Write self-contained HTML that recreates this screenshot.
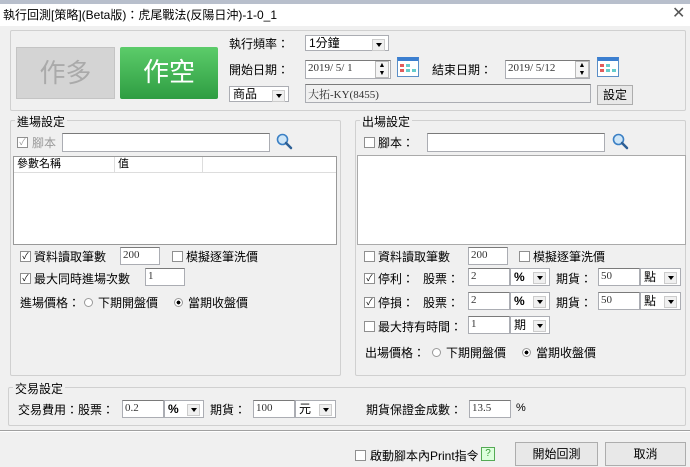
<!DOCTYPE html>
<html><head><meta charset="utf-8"><style>
*{box-sizing:border-box;margin:0;padding:0}
body{width:690px;height:467px;background:#f0f0f0;position:relative;overflow:hidden;font-family:"Liberation Sans","Noto Sans CJK TC",sans-serif;font-size:12px;color:#000}
.a{position:absolute;white-space:nowrap}
.in{position:absolute;background:#fff;border:1px solid #abadb3;border-top-color:#7a7a7a;font-size:11px;padding:1px 2px;color:#333;font-family:"Liberation Serif","Noto Serif CJK SC",serif}
.grp{position:absolute;border:1px solid #d0d0d0;border-radius:2px}
.gl{position:absolute;background:#f0f0f0;padding:0 2px;top:-8px;left:4px;font-size:12px}
.cb{position:absolute;width:11px;height:11px;border:1px solid #8f8f8f;background:#fff;font-size:9px;line-height:9px;text-align:center}
.dd{position:absolute;background:#fff;border:1px solid #abadb3;font-size:12px;padding:0 3px}
.dd::after{content:"";position:absolute;right:3px;top:3px;width:11px;height:10px;background:#f0f0f0;border:1px solid #ccc}
.dd::before{content:"";position:absolute;right:6px;top:7px;border:3px solid transparent;border-top:4px solid #000;z-index:2}
.btn{position:absolute;background:#e8e8e8;border:1px solid #adadad;text-align:center}
.rd{position:absolute;width:9px;height:9px;border-radius:50%;border:1px solid #999;background:#fff}
.cal{position:absolute;width:22px;height:20px;border:1px solid #5b8fc7;background:#fff;border-top:4px solid #3c7fd0}
.cal i{position:absolute;width:4px;height:3px;background:#e25b5b}
.sp{position:absolute;width:14px;border:1px solid #bbb;background:#f4f4f4;font-size:7px;text-align:center;line-height:8px}
</style></head><body>
<div class="a" style="left:0;top:0;width:690px;height:3px;background:#8f9bb0"></div>
<div class="a" style="left:0;top:3px;width:690px;height:23px;background:#fff"></div>
<div class="a" style="left:0;top:0;width:690px;height:4px;background:#b8bfcc"></div>
<div class="a" style="left:3px;top:6px;font-size:12px">執行回測[策略](Beta版)：虎尾戰法(反陽日沖)-1-0_1</div>
<div class="a" style="left:672px;top:3px;font-size:16px;color:#555">✕</div>

<div class="grp" style="left:10px;top:30px;width:676px;height:81px"></div>
<div class="a" style="left:16px;top:47px;width:99px;height:52px;background:#d4d4d4;border:1px solid #c4c4c4;color:#aaa;font-size:26px;text-align:center;line-height:50px">作多</div>
<div class="a" style="left:120px;top:47px;width:98px;height:52px;background:linear-gradient(#5ccc6a,#2e9d42);border-radius:2px;color:#fff;font-size:26px;text-align:center;line-height:50px">作空</div>
<div class="a" style="left:229px;top:35px">執行頻率：</div>
<div class="dd" style="left:305px;top:35px;width:84px;height:16px;line-height:14px">1分鐘</div>
<div class="a" style="left:229px;top:61px">開始日期：</div>
<div class="in" style="left:305px;top:60px;width:86px;height:19px">2019/ 5/ 1</div>
<div class="sp" style="left:375px;top:61px;height:17px">▲<br>▼</div>
<div class="cal" style="left:397px;top:57px"><i style="left:2px;top:3px"></i><i style="left:2px;top:8px"></i><i style="left:8px;top:3px;background:#6cc"></i><i style="left:14px;top:8px;background:#6cc"></i><i style="left:8px;top:8px;background:#6cc"></i></div>
<div class="a" style="left:432px;top:61px">結束日期：</div>
<div class="in" style="left:505px;top:60px;width:85px;height:19px">2019/ 5/12</div>
<div class="sp" style="left:575px;top:61px;height:17px">▲<br>▼</div>
<div class="cal" style="left:597px;top:57px"><i style="left:2px;top:3px"></i><i style="left:2px;top:8px"></i><i style="left:8px;top:3px;background:#6cc"></i><i style="left:14px;top:8px;background:#6cc"></i><i style="left:8px;top:8px;background:#6cc"></i></div>
<div class="dd" style="left:229px;top:86px;width:60px;height:16px;line-height:14px">商品</div>
<div class="in" style="left:305px;top:84px;width:286px;height:19px;background:#f0f0f0">大拓-KY(8455)</div>
<div class="btn" style="left:597px;top:85px;width:36px;height:20px;line-height:18px">設定</div>

<div class="grp" style="left:10px;top:120px;width:331px;height:256px"><span class="gl">進場設定</span></div>
<div class="cb" style="left:17px;top:137px;color:#999">✓</div>
<div class="a" style="left:32px;top:134px;color:#999">腳本</div>
<div class="in" style="left:62px;top:133px;width:208px;height:19px"></div>
<svg class="a" style="left:276px;top:133px" width="17" height="17" viewBox="0 0 17 17"><circle cx="6.5" cy="6.5" r="5" fill="#cfe6f7" stroke="#3a7fc4" stroke-width="1.6"/><path d="M10 10 L15 15" stroke="#2d5f95" stroke-width="2.5" stroke-linecap="round"/></svg>
<div class="a" style="left:13px;top:156px;width:324px;height:89px;background:#fff;border:1px solid #999"></div>
<div class="a" style="left:14px;top:157px;width:322px;height:16px;background:#fff;border-bottom:1px solid #ddd;font-size:11px;line-height:15px"><span style="position:absolute;left:3px">參數名稱</span><span style="position:absolute;left:100px;border-left:1px solid #ddd;padding-left:3px;height:16px">值</span><span style="position:absolute;left:188px;border-left:1px solid #ddd;height:16px"></span></div>
<div class="cb" style="left:20px;top:251px">✓</div><div class="a" style="left:34px;top:248px">資料讀取筆數</div>
<div class="in" style="left:120px;top:247px;width:40px;height:18px">200</div>
<div class="cb" style="left:172px;top:251px"></div><div class="a" style="left:186px;top:248px">模擬逐筆洗價</div>
<div class="cb" style="left:20px;top:273px">✓</div><div class="a" style="left:34px;top:270px">最大同時進場次數</div>
<div class="in" style="left:145px;top:268px;width:40px;height:18px">1</div>
<div class="a" style="left:20px;top:294px">進場價格：</div>
<div class="rd" style="left:84px;top:298px"></div><div class="a" style="left:98px;top:294px">下期開盤價</div>
<div class="rd" style="left:174px;top:298px;background:radial-gradient(#000 35%,#fff 40%)"></div><div class="a" style="left:188px;top:294px">當期收盤價</div>

<div class="grp" style="left:355px;top:120px;width:331px;height:256px"><span class="gl">出場設定</span></div>
<div class="cb" style="left:364px;top:137px"></div><div class="a" style="left:378px;top:134px">腳本：</div>
<div class="in" style="left:427px;top:133px;width:178px;height:19px"></div>
<svg class="a" style="left:612px;top:133px" width="17" height="17" viewBox="0 0 17 17"><circle cx="6.5" cy="6.5" r="5" fill="#cfe6f7" stroke="#3a7fc4" stroke-width="1.6"/><path d="M10 10 L15 15" stroke="#2d5f95" stroke-width="2.5" stroke-linecap="round"/></svg>
<div class="a" style="left:357px;top:155px;width:329px;height:90px;background:#fff;border:1px solid #aaa"></div>
<div class="cb" style="left:364px;top:251px"></div><div class="a" style="left:378px;top:248px">資料讀取筆數</div>
<div class="in" style="left:468px;top:247px;width:40px;height:18px">200</div>
<div class="cb" style="left:519px;top:251px"></div><div class="a" style="left:533px;top:248px">模擬逐筆洗價</div>
<div class="cb" style="left:364px;top:273px">✓</div><div class="a" style="left:378px;top:270px">停利：</div><div class="a" style="left:423px;top:270px">股票：</div>
<div class="in" style="left:468px;top:268px;width:42px;height:18px">2</div><div class="dd" style="left:510px;top:268px;width:40px;height:18px;line-height:16px;font-weight:bold">%</div>
<div class="a" style="left:556px;top:270px">期貨：</div>
<div class="in" style="left:598px;top:268px;width:42px;height:18px">50</div><div class="dd" style="left:640px;top:268px;width:41px;height:18px;line-height:16px">點</div>
<div class="cb" style="left:364px;top:297px">✓</div><div class="a" style="left:378px;top:294px">停損：</div><div class="a" style="left:423px;top:294px">股票：</div>
<div class="in" style="left:468px;top:292px;width:42px;height:18px">2</div><div class="dd" style="left:510px;top:292px;width:40px;height:18px;line-height:16px;font-weight:bold">%</div>
<div class="a" style="left:556px;top:294px">期貨：</div>
<div class="in" style="left:598px;top:292px;width:42px;height:18px">50</div><div class="dd" style="left:640px;top:292px;width:41px;height:18px;line-height:16px">點</div>
<div class="cb" style="left:364px;top:321px"></div><div class="a" style="left:378px;top:318px">最大持有時間：</div>
<div class="in" style="left:468px;top:316px;width:42px;height:18px">1</div><div class="dd" style="left:510px;top:316px;width:40px;height:18px;line-height:16px">期</div>
<div class="a" style="left:365px;top:344px">出場價格：</div>
<div class="rd" style="left:432px;top:348px"></div><div class="a" style="left:446px;top:344px">下期開盤價</div>
<div class="rd" style="left:522px;top:348px;background:radial-gradient(#000 35%,#fff 40%)"></div><div class="a" style="left:536px;top:344px">當期收盤價</div>

<div class="grp" style="left:8px;top:387px;width:678px;height:39px"><span class="gl">交易設定</span></div>
<div class="a" style="left:18px;top:401px">交易費用：股票：</div>
<div class="in" style="left:122px;top:400px;width:42px;height:18px">0.2</div><div class="dd" style="left:164px;top:400px;width:40px;height:18px;line-height:16px;font-weight:bold">%</div>
<div class="a" style="left:210px;top:401px">期貨：</div>
<div class="in" style="left:253px;top:400px;width:42px;height:18px">100</div><div class="dd" style="left:295px;top:400px;width:41px;height:18px;line-height:16px">元</div>
<div class="a" style="left:366px;top:401px">期貨保證金成數：</div>
<div class="in" style="left:469px;top:400px;width:42px;height:18px">13.5</div>
<div class="a" style="left:516px;top:402px;font-size:11px">%</div>

<div class="a" style="left:0;top:430px;width:690px;height:1px;background:#a0a0a0"></div>
<div class="a" style="left:0;top:431px;width:690px;height:1px;background:#fff"></div>
<div class="cb" style="left:355px;top:450px"></div><div class="a" style="left:370px;top:447px">啟動腳本內Print指令</div>
<div class="a" style="left:481px;top:447px;width:14px;height:14px;border:1px solid #5a5;background:#dfd;color:#393;font-size:10px;text-align:center;line-height:12px">?</div>
<div class="btn" style="left:515px;top:442px;width:83px;height:24px;line-height:22px">開始回測</div>
<div class="btn" style="left:605px;top:442px;width:81px;height:24px;line-height:22px">取消</div>
</body></html>
